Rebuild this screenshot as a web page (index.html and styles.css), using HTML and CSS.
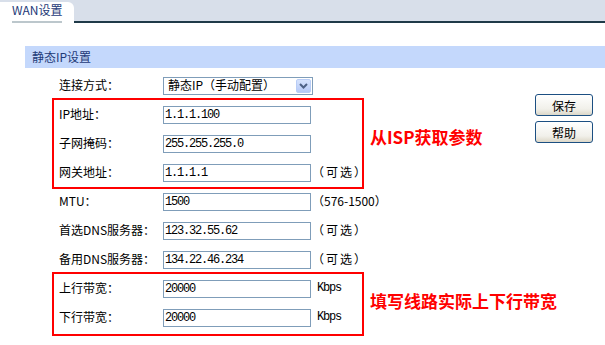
FILE: index.html
```
<!DOCTYPE html>
<html lang="zh-CN">
<head>
    <meta charset="UTF-8">
    <meta name="viewport" content="width=device-width, initial-scale=1.0">
    <link rel="stylesheet" href="styles.css">
    <title>WAN设置</title>
</head>
<body>
    <div class="tabbar">
        <div class="tab"><span class="tab-label">WAN设置</span></div>
    </div>

    <div class="section-title">静态IP设置</div>

    <div class="content">
        <div class="form">
            <div class="row">
                <span class="label">连接方式：</span>
                <div class="select">
                    <span class="select-text">静态IP（手动配置）</span>
                    <span class="select-btn">
                        <svg width="13" height="12" viewBox="0 0 13 12"><path d="M3 4 L6.5 7.5 L10 4" fill="none" stroke="#4d6185" stroke-width="2"/></svg>
                    </span>
                </div>
            </div>

            <div class="group">
                <div class="box">
                    <div class="row">
                        <span class="label">IP地址：</span>
                        <input class="field" type="text" value="1.1.1.100">
                    </div>
                    <div class="row">
                        <span class="label">子网掩码：</span>
                        <input class="field" type="text" value="255.255.255.0">
                    </div>
                    <div class="row">
                        <span class="label">网关地址：</span>
                        <input class="field" type="text" value="1.1.1.1">
                        <span class="note opt">（可选）</span>
                    </div>
                </div>
                <span class="hint hint-isp">从ISP获取参数</span>
            </div>

            <div class="row">
                <span class="label">MTU：</span>
                <input class="field" type="text" value="1500">
                <span class="note">（576-1500）</span>
            </div>
            <div class="row">
                <span class="label">首选DNS服务器：</span>
                <input class="field" type="text" value="123.32.55.62">
                <span class="note opt">（可选）</span>
            </div>
            <div class="row">
                <span class="label">备用DNS服务器：</span>
                <input class="field" type="text" value="134.22.46.234">
                <span class="note opt">（可选）</span>
            </div>

            <div class="group group-last">
                <div class="box">
                    <div class="row">
                        <span class="label">上行带宽：</span>
                        <input class="field" type="text" value="20000">
                        <span class="note unit">Kbps</span>
                    </div>
                    <div class="row">
                        <span class="label">下行带宽：</span>
                        <input class="field" type="text" value="20000">
                        <span class="note unit">Kbps</span>
                    </div>
                </div>
                <span class="hint hint-bw">填写线路实际上下行带宽</span>
            </div>
        </div>

        <div class="buttons">
            <button class="btn">保存</button>
            <button class="btn">帮助</button>
        </div>
    </div>
</body>
</html>
```

FILE: styles.css
```
html, body {
    overflow: hidden;
}
body {
    margin: 0;
    background-color: #ffffff;
    font-family: "Noto Sans CJK SC", "Liberation Sans", sans-serif;
    font-size: 12px;
    line-height: 1.2;
    color: #000000;
}
.tabbar {
    display: flex;
    align-items: flex-end;
    height: 21px;
    background-color: #d8dfea;
    border-bottom: 2px solid #1f3a48;
}
.tab {
    width: 74px;
    height: 21px;
    margin-bottom: -2px;
    padding-left: 12px;
    box-sizing: border-box;
    background-color: #ffffff;
    border-top-right-radius: 6px;
}
.tab-label {
    display: block;
    width: 50px;
    padding: 1px 0 5px;
    line-height: 13px;
    text-align: center;
    white-space: nowrap;
    color: #1e3a78;
    border-bottom: 2px solid #bcc7cc;
}
.section-title {
    height: 22px;
    margin: 23px 0 0 25px;
    padding-left: 7px;
    line-height: 22px;
    background-color: #c4d8fc;
    color: #1e3a78;
}
.content {
    display: flex;
    margin-top: 3px;
}
.form {
    flex-shrink: 0;
    width: 456px;
    margin-left: 52px;
}
.row {
    display: flex;
    align-items: center;
    height: 29px;
    padding-left: 7px;
    white-space: nowrap;
}
.label {
    flex-shrink: 0;
    width: 104px;
}
.field {
    width: 148px;
    height: 18px;
    margin: 0;
    padding: 0 0 0 1px;
    box-sizing: border-box;
    border: 1px solid #7f9db9;
    outline: none;
    font-family: "Liberation Mono", monospace;
    font-size: 12px;
    letter-spacing: -1.2px;
    color: #000000;
}
.note {
    margin-left: 1px;
}
.opt {
    letter-spacing: 2px;
}
.unit {
    margin-left: 6px;
    font-family: "Liberation Mono", monospace;
    letter-spacing: -1.2px;
}
.select {
    display: flex;
    align-items: center;
    justify-content: space-between;
    width: 150px;
    height: 18px;
    box-sizing: border-box;
    border: 1px solid #7f9db9;
    padding: 0 1px 0 4px;
}
.select-btn {
    display: flex;
    width: 15px;
    height: 14px;
    box-sizing: border-box;
    border: 1px solid #b9cdf6;
    border-radius: 2px;
    background: linear-gradient(#d6e3fd, #b5c9f7);
}
.group {
    display: flex;
    align-items: center;
    margin: -2px 0;
}
.group-last {
    margin-bottom: 0;
}
.box {
    flex-shrink: 0;
    width: 312px;
    box-sizing: border-box;
    border: 2px solid #ff0000;
}
.box .row {
    padding-left: 5px;
}
.group-last .box {
    padding-bottom: 2px;
}
.hint {
    margin-left: 6px;
    font-size: 17px;
    font-weight: bold;
    color: #ff0000;
    white-space: nowrap;
}
.hint-isp {
    margin-bottom: 12px;
}
.hint-bw {
    margin-bottom: 6px;
}
.buttons {
    display: flex;
    flex-direction: column;
    gap: 5px;
    margin-left: auto;
    margin-right: 12px;
    padding-top: 23px;
}
.btn {
    width: 58px;
    height: 22px;
    padding: 0;
    border: 1px solid #1c4f82;
    border-radius: 3px;
    background: linear-gradient(#ffffff, #f1f0ea 70%, #dcd7c8);
    font-family: "Noto Sans CJK SC", sans-serif;
    font-size: 12px;
    color: #000000;
}
```
